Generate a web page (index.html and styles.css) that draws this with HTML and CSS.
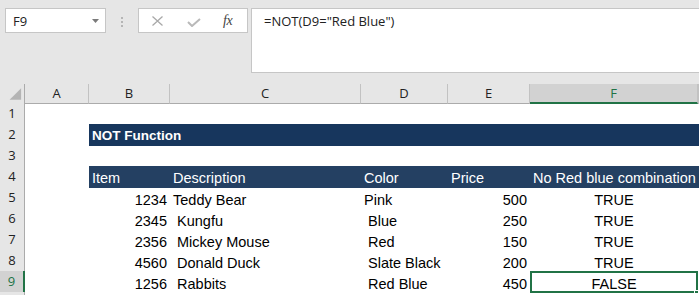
FILE: index.html
```html
<!DOCTYPE html>
<html>
<head>
  <meta charset="UTF-8">
  <title>NOT Function</title>
  <link rel="stylesheet" href="styles.css">
</head>
<body>
  <div class="ribbon">
    <div class="namebox">
      <span>F9</span>
      <svg class="caret" width="7" height="4" viewBox="0 0 7 4"><path d="M0 0h7L3.5 4z" fill="#7a7a7a"/></svg>
    </div>
    <svg class="grip" width="3" height="10" viewBox="0 0 3 10">
      <rect x="0" y="0" width="2" height="2"/>
      <rect x="0" y="4" width="2" height="2"/>
      <rect x="0" y="8" width="2" height="2"/>
    </svg>
    <div class="fx-buttons">
      <svg class="cancel" width="11" height="10" viewBox="0 0 11 10"><path d="M0.5 0.5l10 9M10.5 0.5l-10 9" stroke="#a9a9a9" stroke-width="1.3" fill="none"/></svg>
      <svg class="enter" width="14" height="9" viewBox="0 0 14 9"><path d="M1 4l4 4L13 1" stroke="#b9b9b9" stroke-width="2" fill="none"/></svg>
      <span class="fx">fx</span>
    </div>
    <div class="formula">=NOT(D9="Red Blue")</div>
  </div>

  <div class="sheet">
    <div class="row colhead">
      <div class="corner"><svg width="25" height="19" viewBox="0 0 25 19"><path d="M22 4v12H10z" fill="#b4b4b4"/></svg></div>
      <div class="ch">A</div>
      <div class="ch">B</div>
      <div class="ch">C</div>
      <div class="ch">D</div>
      <div class="ch">E</div>
      <div class="ch active">F</div>
      <div class="ch"></div>
    </div>

    <div class="row"><div class="rh">1</div></div>

    <div class="row">
      <div class="rh">2</div>
      <div class="c"></div>
      <div class="c title">NOT Function</div>
    </div>

    <div class="row"><div class="rh">3</div></div>

    <div class="row head">
      <div class="rh">4</div>
      <div class="c blank"></div>
      <div class="c">Item</div>
      <div class="c">Description</div>
      <div class="c">Color</div>
      <div class="c">Price</div>
      <div class="c">No Red blue combination</div>
      <div class="c"></div>
    </div>

    <div class="row">
      <div class="rh">5</div>
      <div class="c"></div>
      <div class="c num">1234</div>
      <div class="c">Teddy Bear</div>
      <div class="c">Pink</div>
      <div class="c num">500</div>
      <div class="c mid">TRUE</div>
    </div>

    <div class="row">
      <div class="rh">6</div>
      <div class="c"></div>
      <div class="c num">2345</div>
      <div class="c"> Kungfu</div>
      <div class="c"> Blue</div>
      <div class="c num">250</div>
      <div class="c mid">TRUE</div>
    </div>

    <div class="row">
      <div class="rh">7</div>
      <div class="c"></div>
      <div class="c num">2356</div>
      <div class="c"> Mickey Mouse</div>
      <div class="c"> Red</div>
      <div class="c num">150</div>
      <div class="c mid">TRUE</div>
    </div>

    <div class="row">
      <div class="rh">8</div>
      <div class="c"></div>
      <div class="c num">4560</div>
      <div class="c"> Donald Duck</div>
      <div class="c"> Slate Black</div>
      <div class="c num">200</div>
      <div class="c mid">TRUE</div>
    </div>

    <div class="row">
      <div class="rh active">9</div>
      <div class="c"></div>
      <div class="c num">1256</div>
      <div class="c"> Rabbits</div>
      <div class="c"> Red Blue</div>
      <div class="c num">450</div>
      <div class="c mid selected">FALSE</div>
    </div>

    <div class="row"><div class="rh"></div></div>
  </div>
</body>
</html>
```

FILE: styles.css
```css
html, body {
  margin: 0;
  padding: 0;
  background: #ffffff;
  overflow: hidden;
}
body {
  width: 699px;
  height: 295px;
  font-family: "Liberation Sans", Arial, sans-serif;
  color: #000;
}

/* formula bar area */
.ribbon {
  display: flex;
  align-items: flex-start;
  box-sizing: border-box;
  height: 84px;
  padding: 8px 0 0 5px;
  background: #e6e6e6;
  font-family: "Open Sans", sans-serif;
}
.namebox {
  box-sizing: border-box;
  width: 101px;
  height: 25px;
  display: flex;
  align-items: center;
  justify-content: space-between;
  padding: 0 6px 0 7px;
  background: #fff;
  border: 1px solid #c6c6c6;
  font-size: 13px;
  color: #222;
}
.grip {
  margin: 9px 0 0 15px;
  fill: #b5b5b5;
}
.fx-buttons {
  box-sizing: border-box;
  width: 110px;
  height: 25px;
  margin-left: 14px;
  display: flex;
  align-items: center;
  padding-left: 13px;
  background: #fff;
  border: 1px solid #c6c6c6;
}
.cancel {
  margin-top: 1px;
}
.enter {
  margin: 3px 0 0 24px;
}
.fx {
  margin-left: 22px;
  font-family: "Liberation Serif", serif;
  font-style: italic;
  font-size: 14px;
  color: #444;
  letter-spacing: -0.5px;
}
.formula {
  flex: 1;
  box-sizing: border-box;
  height: 65px;
  margin-left: 3px;
  padding: 3px 12px;
  background: #fff;
  border: 1px solid #c6c6c6;
  border-right: none;
  font-size: 13px;
  color: #222;
}

/* grid */
.row {
  display: grid;
  grid-template-columns: 25px 64px 81px 191px 87px 82px 168px 1fr;
  height: 21px;
}
.colhead {
  height: 19px;
}
.corner {
  box-sizing: border-box;
  background: #e6e6e6;
  border-right: 1px solid #ababab;
  border-bottom: 1px solid #ababab;
  display: flex;
}
.ch {
  box-sizing: border-box;
  background: #e6e6e6;
  border-right: 1px solid #c2c2c2;
  border-bottom: 1px solid #ababab;
  text-align: center;
  font-family: "Open Sans", sans-serif;
  font-size: 13px;
  line-height: 18px;
  color: #222;
}
.ch.active {
  background: #d2d2d2;
  color: #217346;
  border-bottom: 2px solid #217346;
}
.rh {
  box-sizing: border-box;
  background: #e6e6e6;
  border-right: 1px solid #ababab;
  border-bottom: 1px solid #c6c6c6;
  text-align: center;
  font-family: "Open Sans", sans-serif;
  font-size: 13px;
  line-height: 21px;
  color: #222;
}
.rh.active {
  background: #d2d2d2;
  color: #217346;
  border-right: 2px solid #217346;
}

.c {
  display: flex;
  align-items: flex-end;
  padding: 0 3px 0 3px;
  font-size: 14.5px;
  line-height: 17px;
  white-space: pre;
  overflow: hidden;
}
.num {
  justify-content: flex-end;
}
.mid {
  justify-content: center;
}
.title {
  grid-column: 3 / -1;
  background: #17365d;
  color: #fff;
  font-weight: bold;
  font-size: 13.5px;
  align-items: center;
}
.head .c {
  background: #244062;
  color: #fff;
  padding-bottom: 1px;
}
.head .c.blank {
  background: none;
}
.selected {
  position: relative;
  box-shadow: inset 0 0 0 2px #217346;
}
.selected::after {
  content: "";
  position: absolute;
  right: -2px;
  bottom: -3px;
  width: 4px;
  height: 4px;
  background: #217346;
  border: 1px solid #fff;
}
```
